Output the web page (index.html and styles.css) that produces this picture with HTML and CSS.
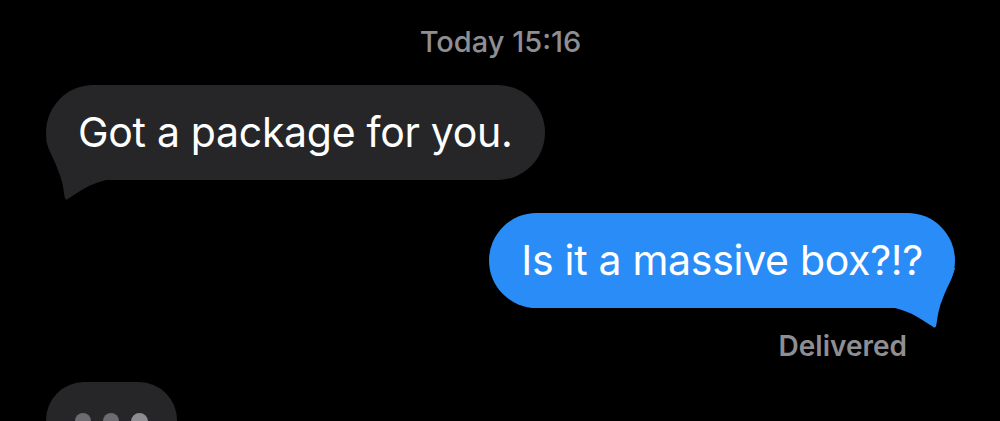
FILE: index.html
```html
<!DOCTYPE html>
<html>
<head>
  <title>Messages</title>
  <link rel="stylesheet" href="styles.css">
</head>
<body>
  <div class="thread">
    <div class="stamp">Today 15:16</div>

    <div class="row incoming">
      <div class="bubble gray">
        <span class="text">Got a package for you.</span>
        <svg class="tail" viewBox="0 0 60 62" width="60" height="62">
          <path d="M0 0 C3 12, 12 26, 16 42 C18 50, 18 55, 19 58 Q20 61, 23 58 C33 52, 43 44, 60 40 L60 0 Z"/>
        </svg>
      </div>
    </div>

    <div class="row outgoing">
      <div class="bubble blue">
        <span class="text">Is it a massive box?!?</span>
        <svg class="tail" viewBox="0 0 60 62" width="60" height="62">
          <path d="M0 0 C3 12, 12 26, 16 42 C18 50, 18 55, 19 58 Q20 61, 23 58 C33 52, 43 44, 60 40 L60 0 Z"/>
        </svg>
      </div>
    </div>
    <div class="status">Delivered</div>

    <div class="row incoming">
      <div class="typing">
        <span class="dot"></span>
        <span class="dot"></span>
        <span class="dot light"></span>
      </div>
    </div>
  </div>
</body>
</html>
```

FILE: styles.css
```css
html, body {
  margin: 0;
  background: #000;
}

body {
  font-family: Inter, "Noto Sans", sans-serif;
  color: #fff;
  height: 421px;
  overflow: hidden;
}

.thread {
  padding: 24px 45px 0 46px;
}

.stamp {
  text-align: center;
  font-size: 29px;
  line-height: 35px;
  font-weight: 500;
  color: #8e8e93;
  margin-bottom: 26px;
}

.row {
  display: flex;
}

.row.outgoing {
  justify-content: flex-end;
  margin-top: 33px;
}

.bubble {
  position: relative;
  height: 95px;
  line-height: 95px;
  padding: 0 32px;
  border-radius: 48px;
  font-size: 41px;
  letter-spacing: -0.3px;
  white-space: nowrap;
}

.bubble .text {
  position: relative;
  z-index: 1;
}

.bubble.gray {
  background: #262628;
}

.bubble.blue {
  background: #2a8cf7;
}

.tail {
  position: absolute;
  top: 55px;
  display: block;
}

.gray .tail {
  left: 0;
  fill: #262628;
}

.blue .tail {
  right: 0;
  fill: #2a8cf7;
  transform: scaleX(-1);
}

.status {
  text-align: right;
  font-size: 28px;
  line-height: 34px;
  font-weight: 600;
  color: #8e8e93;
  margin: 21px 48px 19px 0;
}

.typing {
  display: flex;
  align-items: flex-start;
  gap: 12px;
  width: 131px;
  height: 39px;
  box-sizing: border-box;
  padding: 31px 0 0 29px;
  border-radius: 38px 38px 0 0;
  background: #262628;
}

.dot {
  flex: none;
  width: 16px;
  height: 16px;
  border-radius: 50%;
  background: #6c6c70;
}

.dot.light {
  width: 17px;
  height: 17px;
  background: #8e8e92;
}
```
